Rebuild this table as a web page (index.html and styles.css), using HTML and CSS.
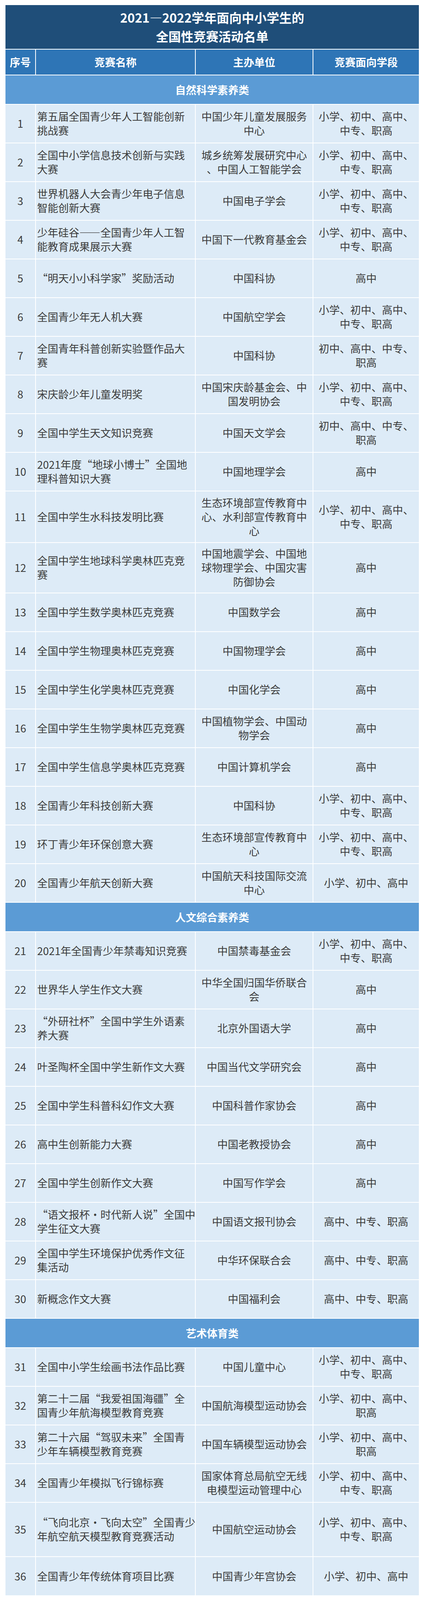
FILE: index.html
```html
<!DOCTYPE html>
<html lang="zh-CN">
<head>
<meta charset="utf-8">
<title>2021—2022学年面向中小学生的全国性竞赛活动名单</title>
<link rel="stylesheet" href="styles.css">
</head>
<body>
<div class="page">
  <div class="sheet">
    <div class="title">2021—2022学年面向中小学生的<br>全国性竞赛活动名单</div>
    <div class="row head">
      <div class="cell">序号</div>
      <div class="cell">竞赛名称</div>
      <div class="cell">主办单位</div>
      <div class="cell">竞赛面向学段</div>
    </div>
    <div class="section">自然科学素养类</div>

    <div class="row"><div class="cell num">1</div><div class="cell name">第五届全国青少年人工智能创新<br>挑战赛</div><div class="cell org">中国少年儿童发展服务<br>中心</div><div class="cell lvl">小学、初中、高中、<br>中专、职高</div></div>
    <div class="row"><div class="cell num">2</div><div class="cell name">全国中小学信息技术创新与实践<br>大赛</div><div class="cell org">城乡统筹发展研究中心<br>、中国人工智能学会</div><div class="cell lvl">小学、初中、高中、<br>中专、职高</div></div>
    <div class="row"><div class="cell num">3</div><div class="cell name">世界机器人大会青少年电子信息<br>智能创新大赛</div><div class="cell org">中国电子学会</div><div class="cell lvl">小学、初中、高中、<br>中专、职高</div></div>
    <div class="row"><div class="cell num">4</div><div class="cell name">少年硅谷——全国青少年人工智<br>能教育成果展示大赛</div><div class="cell org">中国下一代教育基金会</div><div class="cell lvl">小学、初中、高中、<br>中专、职高</div></div>
    <div class="row"><div class="cell num">5</div><div class="cell name">“明天小小科学家”奖励活动</div><div class="cell org">中国科协</div><div class="cell lvl">高中</div></div>
    <div class="row"><div class="cell num">6</div><div class="cell name">全国青少年无人机大赛</div><div class="cell org">中国航空学会</div><div class="cell lvl">小学、初中、高中、<br>中专、职高</div></div>
    <div class="row"><div class="cell num">7</div><div class="cell name">全国青年科普创新实验暨作品大<br>赛</div><div class="cell org">中国科协</div><div class="cell lvl">初中、高中、中专、<br>职高</div></div>
    <div class="row"><div class="cell num">8</div><div class="cell name">宋庆龄少年儿童发明奖</div><div class="cell org">中国宋庆龄基金会、中<br>国发明协会</div><div class="cell lvl">小学、初中、高中、<br>中专、职高</div></div>
    <div class="row"><div class="cell num">9</div><div class="cell name">全国中学生天文知识竞赛</div><div class="cell org">中国天文学会</div><div class="cell lvl">初中、高中、中专、<br>职高</div></div>
    <div class="row"><div class="cell num">10</div><div class="cell name">2021年度“地球小博士”全国地<br>理科普知识大赛</div><div class="cell org">中国地理学会</div><div class="cell lvl">高中</div></div>
    <div class="row r11"><div class="cell num">11</div><div class="cell name">全国中学生水科技发明比赛</div><div class="cell org">生态环境部宣传教育中<br>心、水利部宣传教育中<br>心</div><div class="cell lvl">小学、初中、高中、<br>中专、职高</div></div>
    <div class="row r12"><div class="cell num">12</div><div class="cell name">全国中学生地球科学奥林匹克竞<br>赛</div><div class="cell org">中国地震学会、中国地<br>球物理学会、中国灾害<br>防御协会</div><div class="cell lvl">高中</div></div>
    <div class="row"><div class="cell num">13</div><div class="cell name">全国中学生数学奥林匹克竞赛</div><div class="cell org">中国数学会</div><div class="cell lvl">高中</div></div>
    <div class="row"><div class="cell num">14</div><div class="cell name">全国中学生物理奥林匹克竞赛</div><div class="cell org">中国物理学会</div><div class="cell lvl">高中</div></div>
    <div class="row"><div class="cell num">15</div><div class="cell name">全国中学生化学奥林匹克竞赛</div><div class="cell org">中国化学会</div><div class="cell lvl">高中</div></div>
    <div class="row"><div class="cell num">16</div><div class="cell name">全国中学生生物学奥林匹克竞赛</div><div class="cell org">中国植物学会、中国动<br>物学会</div><div class="cell lvl">高中</div></div>
    <div class="row"><div class="cell num">17</div><div class="cell name">全国中学生信息学奥林匹克竞赛</div><div class="cell org">中国计算机学会</div><div class="cell lvl">高中</div></div>
    <div class="row"><div class="cell num">18</div><div class="cell name">全国青少年科技创新大赛</div><div class="cell org">中国科协</div><div class="cell lvl">小学、初中、高中、<br>中专、职高</div></div>
    <div class="row"><div class="cell num">19</div><div class="cell name">环丁青少年环保创意大赛</div><div class="cell org">生态环境部宣传教育中<br>心</div><div class="cell lvl">小学、初中、高中、<br>中专、职高</div></div>
    <div class="row"><div class="cell num">20</div><div class="cell name">全国青少年航天创新大赛</div><div class="cell org">中国航天科技国际交流<br>中心</div><div class="cell lvl">小学、初中、高中</div></div>

    <div class="section">人文综合素养类</div>

    <div class="row"><div class="cell num">21</div><div class="cell name">2021年全国青少年禁毒知识竞赛</div><div class="cell org">中国禁毒基金会</div><div class="cell lvl">小学、初中、高中、<br>中专、职高</div></div>
    <div class="row"><div class="cell num">22</div><div class="cell name">世界华人学生作文大赛</div><div class="cell org">中华全国归国华侨联合<br>会</div><div class="cell lvl">高中</div></div>
    <div class="row"><div class="cell num">23</div><div class="cell name">“外研社杯”全国中学生外语素<br>养大赛</div><div class="cell org">北京外国语大学</div><div class="cell lvl">高中</div></div>
    <div class="row"><div class="cell num">24</div><div class="cell name">叶圣陶杯全国中学生新作文大赛</div><div class="cell org">中国当代文学研究会</div><div class="cell lvl">高中</div></div>
    <div class="row"><div class="cell num">25</div><div class="cell name">全国中学生科普科幻作文大赛</div><div class="cell org">中国科普作家协会</div><div class="cell lvl">高中</div></div>
    <div class="row"><div class="cell num">26</div><div class="cell name">高中生创新能力大赛</div><div class="cell org">中国老教授协会</div><div class="cell lvl">高中</div></div>
    <div class="row"><div class="cell num">27</div><div class="cell name">全国中学生创新作文大赛</div><div class="cell org">中国写作学会</div><div class="cell lvl">高中</div></div>
    <div class="row"><div class="cell num">28</div><div class="cell name">“语文报杯•时代新人说”全国中<br>学生征文大赛</div><div class="cell org">中国语文报刊协会</div><div class="cell lvl">高中、中专、职高</div></div>
    <div class="row"><div class="cell num">29</div><div class="cell name">全国中学生环境保护优秀作文征<br>集活动</div><div class="cell org">中华环保联合会</div><div class="cell lvl">高中、中专、职高</div></div>
    <div class="row"><div class="cell num">30</div><div class="cell name">新概念作文大赛</div><div class="cell org">中国福利会</div><div class="cell lvl">高中、中专、职高</div></div>

    <div class="section">艺术体育类</div>

    <div class="row"><div class="cell num">31</div><div class="cell name">全国中小学生绘画书法作品比赛</div><div class="cell org">中国儿童中心</div><div class="cell lvl">小学、初中、高中、<br>中专、职高</div></div>
    <div class="row"><div class="cell num">32</div><div class="cell name">第二十二届“我爱祖国海疆”全<br>国青少年航海模型教育竞赛</div><div class="cell org">中国航海模型运动协会</div><div class="cell lvl">小学、初中、高中、<br>职高</div></div>
    <div class="row"><div class="cell num">33</div><div class="cell name">第二十六届“驾驭未来”全国青<br>少年车辆模型教育竞赛</div><div class="cell org">中国车辆模型运动协会</div><div class="cell lvl">小学、初中、高中、<br>职高</div></div>
    <div class="row"><div class="cell num">34</div><div class="cell name">全国青少年模拟飞行锦标赛</div><div class="cell org">国家体育总局航空无线<br>电模型运动管理中心</div><div class="cell lvl">小学、初中、高中、<br>中专、职高</div></div>
    <div class="row r35"><div class="cell num">35</div><div class="cell name">“飞向北京·飞向太空”全国青少<br>年航空航天模型教育竞赛活动</div><div class="cell org">中国航空运动协会</div><div class="cell lvl">小学、初中、高中、<br>中专、职高</div></div>
    <div class="row last"><div class="cell num">36</div><div class="cell name">全国青少年传统体育项目比赛</div><div class="cell org">中国青少年宫协会</div><div class="cell lvl">小学、初中、高中</div></div>
  </div>
</div>
</body>
</html>
```

FILE: styles.css
```css
html, body {
  margin: 0;
  padding: 0;
  background: #ffffff;
}

body {
  font-family: "Noto Sans CJK SC", "Noto Sans", sans-serif;
  color: #3b3b3b;
}

.page {
  padding: 12.7px 8px 12px 14px;
}

.sheet {
  width: 1058px;
  display: flex;
  flex-direction: column;
  gap: 2px;
  background: #ffffff;
}

.title {
  height: 112px;
  background: #1f4e79;
  color: #ffffff;
  font-weight: 700;
  font-size: 32px;
  line-height: 47.5px;
  display: flex;
  align-items: center;
  justify-content: center;
  text-align: center;
}

.row {
  display: grid;
  grid-template-columns: 76px 407px 299px 270px;
  column-gap: 2px;
  height: 97px;
}

.row.r11 { height: 130px; }
.row.r12 { height: 127px; }
.row.r35 { height: 137px; }
.row.last { height: 98px; }

.cell {
  background: #ddebf7;
  font-size: 27px;
  line-height: 36px;
  display: flex;
  align-items: center;
  justify-content: center;
  text-align: center;
  white-space: nowrap;
}

.cell.name {
  justify-content: flex-start;
  text-align: left;
  padding-left: 3px;
}

.row.head {
  height: 64px;
}

.row.head .cell {
  background: #2e75b6;
  color: #ffffff;
  font-weight: 700;
}

.section {
  height: 73px;
  background: #5b9bd5;
  color: #ffffff;
  font-weight: 700;
  font-size: 27px;
  display: flex;
  align-items: center;
  justify-content: center;
}
```
